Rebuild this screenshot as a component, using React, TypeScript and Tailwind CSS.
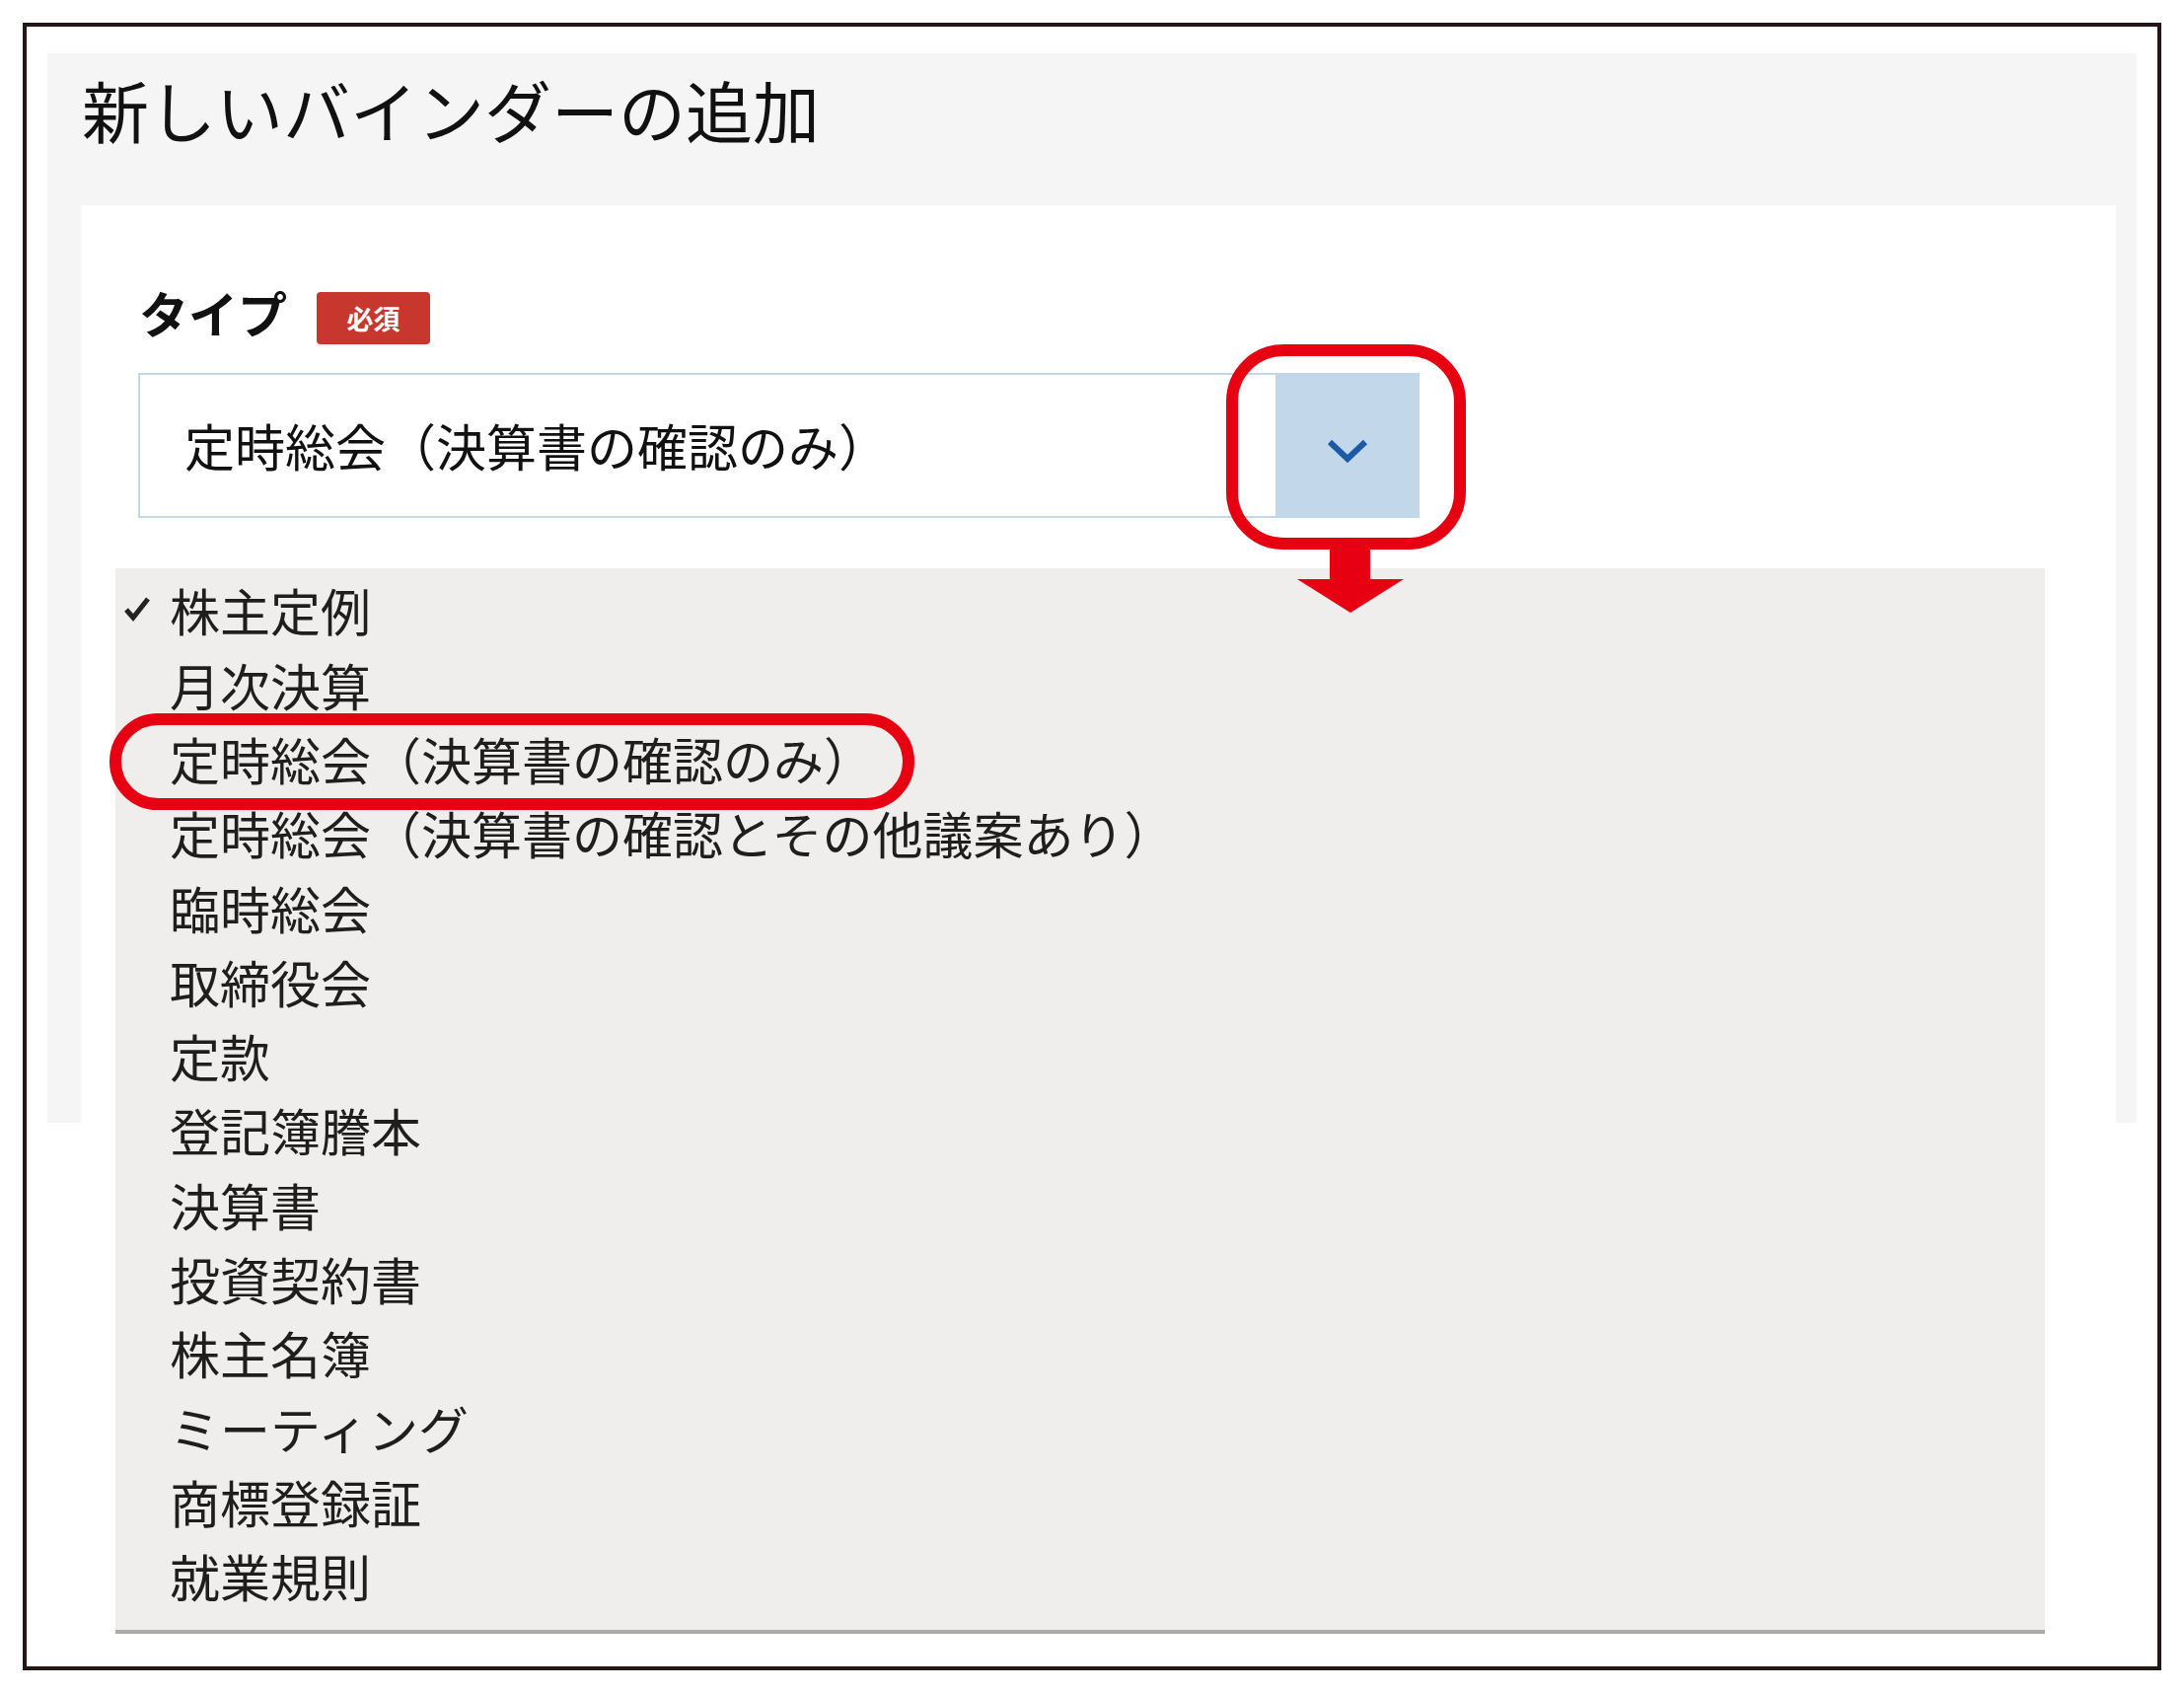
import React from "react";

const items = [
  "株主定例",
  "月次決算",
  "定時総会（決算書の確認のみ）",
  "定時総会（決算書の確認とその他議案あり）",
  "臨時総会",
  "取締役会",
  "定款",
  "登記簿謄本",
  "決算書",
  "投資契約書",
  "株主名簿",
  "ミーティング",
  "商標登録証",
  "就業規則",
];

export default function App() {
  return (
    <div
      className="w-[2214px] h-[1716px] bg-white pt-[23px] pl-[23px] [text-spacing-trim:space-all]"
      style={{ fontFamily: '"Noto Sans CJK JP", "Noto Sans", sans-serif' }}
    >
      <div className="relative w-[2168px] h-[1670px] border-4 border-[#231815]">
        {/* gray panel */}
        <div className="ml-[21px] mt-[27px] w-[2118px] h-[1084px] bg-[#f5f5f5] flex flex-col">
          <div className="pl-[35px] pt-[16px] h-[154px] text-[68px] leading-[82px] text-[#111111]">
            新しいバインダーの追加
          </div>
          <div className="ml-[34px] w-[2063px] flex-1 bg-white pl-[58px] pt-[88px]">
            <div className="flex items-center h-[53px]">
              <span className="text-[50px] leading-[53px] font-bold text-[#111111] ml-[1px] mb-[12px]">
                タイプ
              </span>
              <span className="ml-[30px] w-[115px] h-[53px] rounded-[4px] bg-[#c8372d] text-white text-[27px] font-bold flex items-center justify-center leading-none">
                必須
              </span>
            </div>
            <div className="mt-[29px] w-[1299px] h-[147px] flex border-2 border-[#c3d7ea]">
              <div className="flex-1 flex items-center pl-[45px] text-[51px] text-[#111111]">
                定時総会（決算書の確認のみ）
              </div>
              <div className="w-[146px] -mt-[2px] -mb-[2px] -mr-[2px] bg-[#c3d7ea] flex items-center justify-center">
                <svg width="44" height="26" viewBox="0 0 44 26" className="mt-[10px]">
                  <polyline
                    points="4,4 22,21 40,4"
                    fill="none"
                    stroke="#1c5aa6"
                    strokeWidth="6"
                    strokeLinejoin="miter"
                  />
                </svg>
              </div>
            </div>
          </div>
        </div>

        {/* dropdown menu */}
        <div className="absolute left-[90px] top-[549px] w-[1956px] h-[1080px] bg-[#efeeec] border-b-[4px] border-[#ababab] pt-[5px]">
          {items.map((t, i) => (
            <div
              key={t}
              className="relative h-[75.3px] flex items-center pl-[55px] text-[51px] text-[#1e1e1e]"
            >
              {i === 0 && (
                <span className="absolute left-[7px] top-[22px] leading-none">
                  <svg width="30" height="28" viewBox="0 0 30 28">
                    <polyline
                      points="4,15 11,23 26,4"
                      fill="none"
                      stroke="#222222"
                      strokeWidth="5"
                    />
                  </svg>
                </span>
              )}
              {t}
            </div>
          ))}
        </div>

        {/* red annotation around the button */}
        <div className="absolute left-[1216px] top-[322px] w-[243px] h-[208px] border-[12px] border-[#e60012] rounded-[58px]" />
        <svg
          className="absolute left-[1288px] top-[528px]"
          width="108"
          height="66"
          viewBox="0 0 108 66"
        >
          <rect x="33" y="0" width="41" height="34" fill="#e60012" />
          <polygon points="0,32 108,32 54,66" fill="#e60012" />
        </svg>

        {/* red annotation around selected item */}
        <div className="absolute left-[84px] top-[696px] w-[816px] h-[98px] border-[12px] border-[#e60012] rounded-[49px]" />
      </div>
    </div>
  );
}
